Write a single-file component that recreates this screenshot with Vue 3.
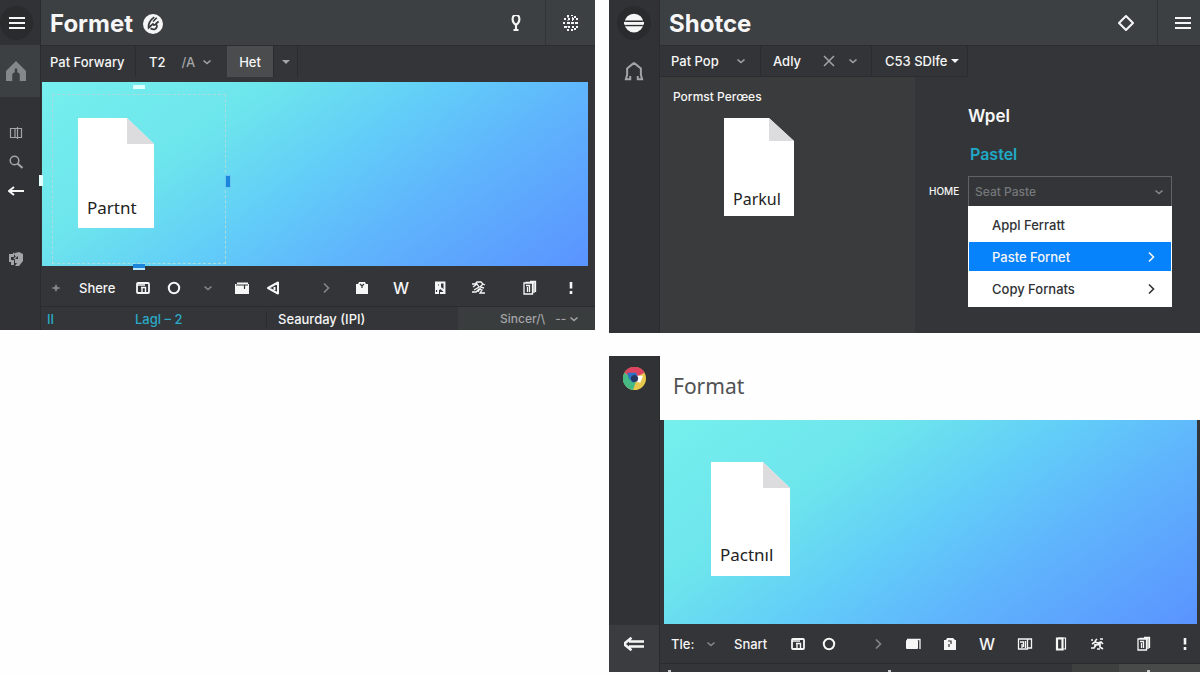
<script setup>
import { ref } from 'vue'

const pasteMode = ref('Seat Paste')

const icons = {
  menu: '<path d="M0 3h16M0 8h16M0 13h16" stroke-width="2"/>',
  home: '<path d="M8 0 0 8v8h5v-5q0-2 3-2t3 2v5h5V8z" fill="currentColor" stroke="none"/><path d="M8 6v4" stroke="#3d4043" stroke-width="2"/>',
  homeLine: '<path d="M8 1.500 2.500 6v5L1.500 14.500H5V12M8 1.500 13.500 6v5l1 3.500H11V12" stroke-width="1.600"/>',
  book: '<path d="M2.500 3.500h11v9h-11zM7 3v10M9.500 2v12"/>',
  search: '<circle cx="6.500" cy="6.500" r="4.300" stroke-width="1.500"/><path d="m9.500 9.500 5 4.500" stroke-width="2.200"/>',
  back: '<path d="M16 8H1M6 4 1 8l5 4" stroke-width="2"/>',
  backDouble: '<path d="M16 6H4M16 10H4M6 3 0 8l6 5" stroke-width="2"/>',
  badge: '<path d="M1 3h5v3H3v3h3v5H3v-3H1zM7 2l4-1 4 2v7l-4 5H7l2-3H7V8h3V5H7z" fill="currentColor" stroke="none"/><path d="m5 2 4 3-3 3"/>',
  pin: '<path d="M8 10C3 7 4 0 8 0s5 7 0 10zM8 9v6M5.500 15h5" stroke-width="2.100"/>',
  dots: '<path d="M4 1h2M8 0h2M11 2h2M1 4h2M5 4h2M9 4h2M13 4h2M0 8h2M4 8h3M8 8h3M12 8h3M1 12h3M5 12h2M9 12h2M13 12h2M4 15h2M8 15h2M11 14h2" stroke-width="1.800"/><path d="M5 2v11M9.500 2v11" stroke-dasharray="1 2" stroke-width="1"/>',
  diamond: '<path d="M8 1 15 8l-7 7-7-7z" stroke-width="2" stroke-linejoin="round"/>',
  spark: '<path d="M8 4 9.500 7 13 8 9.500 9 8 12 6.500 9 3 8l3.500-1z" fill="currentColor" stroke="none"/>',
  window: '<rect x="2" y="3" width="12" height="10" rx="1" stroke-width="1.800"/><path d="M2 5h8M6 7.500h5M7 7v5M10.500 7v5" stroke-width="1.400"/>',
  ring: '<circle cx="8" cy="8" r="5.200" stroke-width="2"/>',
  down: '<path d="m4.500 6.500 3.500 3 3.500-3" stroke-width="1.600"/>',
  caret: '<path d="M4 6h8l-4 4z" fill="currentColor" stroke="none"/>',
  next: '<path d="m6 3.500 4.500 4.500L6 12.500" stroke-width="1.600"/>',
  close: '<path d="m3 3 10 10M13 3 3 13" stroke-width="1.500"/>',
  folder: '<path d="M3 2.500h11V4H15v10H1V4h2z" fill="currentColor" stroke="none"/><path d="M2 5h12M10.500 5v4" stroke="#323437"/>',
  triangle: '<path d="M13 2.500v11L3 8zM9.500 7v3" stroke-width="2" stroke-linejoin="round"/>',
  bag: '<path d="M2 4h2l1-2h6l1 2h2v10H2z" fill="currentColor" stroke="none"/><path d="m6 4 2 2 2-2M8 6v2" stroke="#323437"/>',
  bagLock: '<path d="M2 4h2l1-2h6l2 2h1v10H2z" fill="currentColor" stroke="none"/><path d="M6 5h3v3M7 8v3" stroke="#323437"/>',
  page: '<path d="M3 1.500h6V9l-2 1v4H3z" fill="currentColor" stroke="none"/><path d="M9 2.500h3.500V13H8M9 8l3 3" stroke-width="1.900"/><path d="M4.500 10v2M6 5h1" stroke="#323437"/>',
  scribble: '<path d="M1 4h3l2-2h4l2 2-3 3 4 1M2 7l4-3 2 3-5 3M1 12h4l3-3 3 1-2 3h5M12 4l2 1M10 7l-3 5" stroke-width="1.300"/>',
  gear: '<path d="M2 4h2M6 5l2-2M11 3h3M3 8l3-2 3 1 3-1 2 2M2 12h3l2-3 4-1v3l3 2M6 8v3M8 13h3" stroke-width="1.700"/>',
  stack: '<path d="M2 3h8.500v11H2zM4 5.500h3.500V12M5.500 7v5M3.500 2.500h8.500V13M8 1.500h5.500V12" stroke-width="1.300"/>',
  card: '<rect x="1" y="4" width="12" height="9" rx="1" fill="currentColor" stroke="none"/><path d="M2 3.500h13V13" stroke-width="1.300"/>',
  columns: '<path d="M1.500 3h9v10h-9zM3 6h3.500v5M8.500 5v7M11 3h3.500v9H11M5 8v4" stroke-width="1.300"/>',
  pages: '<path d="M4 2.500h5.500v11H4z" stroke-width="2.200"/><path d="M5 2h7.500v11H10" stroke-width="1.200"/>',
  more: '<path d="M8 2v6.500M8 11v3" stroke-width="2.600"/>',
  globe: '<circle cx="8" cy="8" r="7.500" fill="currentColor" stroke="none"/><path d="M1 6.500h14M1 10h14" stroke="#2b2d2f"/><path d="M0 8.200h16" stroke-width="2"/>',
  swirl: '<circle cx="8" cy="8" r="8" fill="currentColor" stroke="none"/><path d="M9 2.500Q4 6 4.500 11l4-3.500M6 11.500q4 2 5-1t-3-1.500M8 6l3-3M10 8l2.500-2" stroke="#36393c" stroke-width="1.400"/>',
  chrome: '<g stroke="none"><circle cx="8" cy="8" r="8" fill="#e8c84c"/><path d="M1 4a8 8 0 0 1 14 0L9 7 5 7z" fill="#de4460"/><path d="M1 4a8 8 0 0 0 6 12l2-6-4-3z" fill="#45b883"/><path d="M3 4h6l2 4-4 3-3-3z" fill="#2b72c5"/><path d="M9 6h5l-2 5-3-1z" fill="#fff"/><circle cx="8" cy="8" r="2.500" fill="#253663"/></g>',
}

const shareTools = [
  { icon: 'spark', label: 'Add', dim: true },
  { text: 'Shere' },
  { icon: 'window', label: 'Layout' },
  { icon: 'ring', label: 'Shape' },
  { icon: 'down', label: 'More shapes', dim: true },
  { icon: 'folder', label: 'Folder' },
  { icon: 'triangle', label: 'Previous' },
  { icon: 'next', label: 'Next', dim: true },
  { icon: 'bag', label: 'Clipboard' },
  { text: 'W', large: true },
  { icon: 'page', label: 'Page' },
  { icon: 'scribble', label: 'Effects' },
  { icon: 'stack', label: 'Copies' },
  { icon: 'more', label: 'More' },
]

const smartTools = [
  { text: 'Tle:' },
  { icon: 'down', label: 'Open', dim: true },
  { text: 'Snart' },
  { icon: 'window', label: 'Layout' },
  { icon: 'ring', label: 'Shape' },
  { icon: 'next', label: 'Next', dim: true },
  { icon: 'card', label: 'Card' },
  { icon: 'bagLock', label: 'Clipboard' },
  { text: 'W', large: true },
  { icon: 'columns', label: 'Columns' },
  { icon: 'pages', label: 'Pages' },
  { icon: 'gear', label: 'Effects' },
  { icon: 'stack', label: 'Copies' },
  { icon: 'more', label: 'More' },
]

const menuItems = [
  { text: 'Appl Ferratt', arrow: false, active: false },
  { text: 'Paste Fornet', arrow: true, active: true },
  { text: 'Copy Fornats', arrow: true, active: false },
]
</script>

<template>
  <main class="board">
    <section class="panel narrow">
      <nav class="side">
        <button class="side-top" aria-label="Menu"><span class="disc"><svg class="icon" viewBox="0 0 16 16" v-html="icons.menu" /></span></button>
        <button class="side-home lit" aria-label="Home"><svg class="icon big" viewBox="0 0 16 16" v-html="icons.home" /></button>
        <div class="side-tools">
          <button class="grey" aria-label="Library"><svg class="icon" viewBox="0 0 16 16" v-html="icons.book" /></button>
          <button class="grey" aria-label="Search"><svg class="icon" viewBox="0 0 16 16" v-html="icons.search" /></button>
          <button aria-label="Back"><svg class="icon" viewBox="0 0 16 16" v-html="icons.back" /></button>
        </div>
        <button class="side-badge grey" aria-label="Assets"><svg class="icon" viewBox="0 0 16 16" v-html="icons.badge" /></button>
      </nav>
      <div class="work">
        <header class="head">
          <h1>Formet</h1>
          <svg class="icon brand" viewBox="0 0 16 16" v-html="icons.swirl" />
          <button class="head-tool" aria-label="Tips"><svg class="icon" viewBox="0 0 16 16" v-html="icons.pin" /></button>
          <button class="head-end" aria-label="Apps"><svg class="icon" viewBox="0 0 16 16" v-html="icons.dots" /></button>
        </header>
        <div class="tabs first">
          <button class="tab lead">Pat Forwary</button>
          <button class="tab style">T2 <span class="muted">/A</span><svg class="icon muted" viewBox="0 0 16 16" v-html="icons.down" /></button>
          <button class="tab chosen">Het</button>
          <button class="tab drop" aria-label="More"><svg class="icon muted" viewBox="0 0 16 16" v-html="icons.caret" /></button>
        </div>
        <div class="canvas first-canvas">
          <div class="selection">
            <i class="handle top" /><i class="handle right" /><i class="handle bottom" /><i class="handle left" />
          </div>
          <div class="doc doc-a"><span>Partnt</span></div>
        </div>
        <div class="tools share">
          <button v-for="(tool, i) in shareTools" :key="i" :class="{ dim: tool.dim, large: tool.large }" :aria-label="tool.label">
            <template v-if="tool.text">{{ tool.text }}</template>
            <svg v-else class="icon" viewBox="0 0 16 16" v-html="icons[tool.icon]" />
          </button>
        </div>
        <footer class="status">
          <span class="cyan">II</span>
          <span class="cyan">Lagl – 2</span>
          <span class="day">Seaurday (IPI)</span>
          <span class="since">Sincer/\ <span class="dash">--</span><svg class="icon" viewBox="0 0 16 16" v-html="icons.down" /></span>
        </footer>
      </div>
    </section>

    <div class="stack">
      <section class="panel">
        <nav class="side">
          <button class="side-top" aria-label="Globe"><span class="disc"><svg class="icon big" viewBox="0 0 16 16" v-html="icons.globe" /></span></button>
          <button class="side-home grey" aria-label="Home"><svg class="icon big" viewBox="0 0 16 16" v-html="icons.homeLine" /></button>
        </nav>
        <div class="work">
          <header class="head wide">
            <h1>Shotce</h1>
            <button class="head-tool" aria-label="Marker"><svg class="icon" viewBox="0 0 16 16" v-html="icons.diamond" /></button>
            <button class="head-end" aria-label="Menu"><svg class="icon" viewBox="0 0 16 16" v-html="icons.menu" /></button>
          </header>
          <div class="columns">
            <div class="tabs second">
              <button class="tab pop">Pat Pop<svg class="icon muted" viewBox="0 0 16 16" v-html="icons.down" /></button>
              <button class="tab adly">Adly<svg class="icon muted cross" viewBox="0 0 16 16" v-html="icons.close" /><svg class="icon muted" viewBox="0 0 16 16" v-html="icons.down" /></button>
              <button class="tab css">C53 SDlfe<svg class="icon" viewBox="0 0 16 16" v-html="icons.caret" /></button>
            </div>
            <div class="preview">
              <h2>Pormst Perœes</h2>
              <div class="doc doc-b"><span>Parkul</span></div>
            </div>
            <div class="form">
              <h2 class="title">Wpel</h2>
              <a class="pastel" href="#">Pastel</a>
              <label class="home-label" for="paste">HOME</label>
              <div class="field">
                <select id="paste" v-model="pasteMode"><option>Seat Paste</option></select>
                <svg class="icon" viewBox="0 0 16 16" v-html="icons.down" />
              </div>
              <div class="menu" role="menu">
                <button v-for="item in menuItems" :key="item.text" role="menuitem" :class="{ active: item.active }">
                  {{ item.text }}<svg v-if="item.arrow" class="icon" viewBox="0 0 16 16" v-html="icons.next" />
                </button>
              </div>
            </div>
          </div>
        </div>
      </section>

      <section class="panel">
        <nav class="side">
          <button class="side-top" aria-label="Browser"><svg class="icon huge" viewBox="0 0 16 16" v-html="icons.chrome" /></button>
          <button class="side-back" aria-label="Back"><svg class="icon big" viewBox="0 0 16 16" v-html="icons.backDouble" /></button>
        </nav>
        <div class="work">
          <header class="plain"><h1>Format</h1></header>
          <div class="canvas last-canvas">
            <div class="doc doc-c"><span>Pactnıl</span></div>
          </div>
          <div class="tools smart">
            <button v-for="(tool, i) in smartTools" :key="i" :class="{ dim: tool.dim, large: tool.large }" :aria-label="tool.label">
              <template v-if="tool.text">{{ tool.text }}</template>
              <svg v-else class="icon" viewBox="0 0 16 16" v-html="icons[tool.icon]" />
            </button>
          </div>
          <footer class="strip"><i /><i /><i /><i /></footer>
        </div>
      </section>
    </div>
  </main>
</template>

<style>
body {
  margin: 0;
  background: #fefefe;
}
</style>

<style scoped>
.board {
  display: grid;
  grid-template-columns: 595fr 591fr;
  column-gap: 14px;
  align-items: start;
  font-family: Inter, "Noto Sans", sans-serif;
  font-size: 13px;
  font-weight: 500;
  color: #f6f6f6;
}
.stack {
  display: flex;
  flex-direction: column;
  gap: 23px;
  min-width: 0;
}
.panel {
  display: grid;
  grid-template-columns: 51px 1fr;
  background: #333538;
}
.narrow {
  grid-template-columns: 41px 1fr;
}
button {
  display: flex;
  align-items: center;
  padding: 0;
  border: 0;
  background: none;
  color: inherit;
  font: inherit;
  white-space: nowrap;
}
h1, h2 {
  margin: 0;
}
.icon {
  width: 16px;
  height: 16px;
  flex: none;
  fill: none;
  stroke: currentColor;
  stroke-width: 1.2;
}
.big {
  width: 20px;
  height: 20px;
}
.huge {
  width: 23px;
  height: 23px;
}
.grey, .muted {
  color: #a2a4a6;
}

.side {
  display: flex;
  flex-direction: column;
  background: #303235;
  border-right: 1px solid #292b2d;
}
.side button {
  justify-content: center;
}
.side-top {
  height: 45px;
}
.disc {
  display: grid;
  place-items: center;
  width: 34px;
  height: 34px;
  border-radius: 50%;
  background: #292b2d;
}
.side-home {
  height: 52px;
}
.lit {
  background: #3d4043;
  color: #85888a;
}
.side-tools {
  display: flex;
  flex-direction: column;
  gap: 13px;
  margin-top: 28px;
  padding-right: 8px;
}
.narrow .side-top {
  padding-right: 7px;
}
.narrow .side-home {
  padding-right: 8px;
}
.side-badge {
  margin-top: 52px;
  padding-right: 8px;
}
.side-back {
  height: 47px;
  margin-top: auto;
  padding-bottom: 10px;
  box-sizing: border-box;
  background: #3a3c3f;
}

.work {
  min-width: 0;
}
.head {
  display: flex;
  align-items: center;
  height: 45px;
  padding-left: 9px;
  background: #3d4043;
  border-bottom: 1px solid #2b2d2f;
}
.head h1 {
  font-size: 24px;
  font-weight: 700;
  line-height: 30px;
  padding-top: 3px;
}
.brand {
  width: 20px;
  height: 20px;
  margin: 2px 0 0 10px;
}
.head-tool {
  margin-left: auto;
  padding: 0 21px;
}
.head-end {
  align-self: stretch;
  justify-content: center;
  width: 50px;
  border-left: 1px solid #323437;
}
.wide .head-end {
  width: 43px;
  padding-left: 8px;
}
.wide .head-tool {
  padding-right: 23px;
}

.tabs {
  display: flex;
  height: 31px;
}
.tab {
  border-right: 1px solid #2a2c2e;
}
.first {
  margin-bottom: 5px;
}
.lead {
  width: 95px;
  padding-left: 9px;
}
.style {
  width: 91px;
  padding-left: 13px;
  border-right: 0;
}
.style .muted {
  margin-left: 16px;
}
.style .icon.muted {
  margin-left: 4px;
}
.chosen {
  justify-content: center;
  width: 47px;
  background: #4a4c4e;
}
.drop {
  justify-content: center;
  width: 24px;
}

.canvas {
  position: relative;
  background: linear-gradient(145deg, #76efee 0%, #6de5ec 29%, #62cdf8 50%, #5fb4fc 69%, #5a93ff 100%);
}
.first-canvas {
  height: 148px;
  margin: 0 7px 0 1px;
  padding: 36px 0 0 36px;
}
.last-canvas {
  height: 162px;
  margin: 0 3px 0 4px;
  padding: 42px 0 0 47px;
}
.doc {
  position: relative;
  box-sizing: border-box;
  display: flex;
  align-items: flex-end;
  width: 76px;
  height: 110px;
  padding: 0 0 9px 9px;
  background: #fff;
  color: #222;
  font-family: "Noto Sans", sans-serif;
  font-size: 17px;
  font-weight: 400;
  line-height: 22px;
  clip-path: polygon(0 0, calc(100% - 27px) 0, 100% 26px, 100% 100%, 0 100%);
}
.doc::before {
  content: "";
  position: absolute;
  top: 0;
  right: 0;
  width: 27px;
  height: 26px;
  background: #dcdcde;
}
.doc-b {
  width: 70px;
  height: 98px;
  margin: 14px 0 0 64px;
  padding-bottom: 6px;
  font-size: 16px;
  clip-path: polygon(0 0, calc(100% - 25px) 0, 100% 23px, 100% 100%, 0 100%);
}
.doc-b::before {
  width: 25px;
  height: 23px;
}
.doc-c {
  width: 79px;
  height: 114px;
  padding-bottom: 10px;
}
.selection {
  position: absolute;
  inset: 12px auto 2px 10px;
  width: 172px;
  border: 1px dashed #a9dcdc;
}
.handle {
  position: absolute;
  background: #1b86dc;
}
.handle.top, .handle.bottom {
  left: 80px;
  width: 12px;
  height: 4px;
}
.handle.left, .handle.right {
  top: 80px;
  width: 4px;
  height: 11px;
}
.handle.top {
  top: -10px;
  background: #dcffff;
}
.handle.bottom {
  bottom: -7px;
  border-bottom: 2px solid #b9e5fa;
}
.handle.left {
  left: -14px;
  background: #e3ffff;
}
.handle.right {
  right: -6px;
  border: 1px solid #69c5f2;
}

.tools {
  display: grid;
  align-items: center;
  border-bottom: 1px solid #292b2d;
}
.share {
  grid-template-columns: 31fr 56fr 31fr 34fr 34fr 31fr 53fr 36fr 39fr 39fr 39fr 51fr 41fr 32fr;
  padding: 4px 0 0 7px;
  height: 36px;
}
.smart {
  grid-template-columns: 32fr 31fr 56fr 31fr 49fr 35fr 37fr 37fr 38fr 36fr 36fr 47fr 41fr 23fr;
  padding: 1px 0 0 11px;
  height: 38px;
}
.dim {
  color: #85888a;
}
.large {
  font-size: 16px;
}
.status {
  display: grid;
  grid-template-columns: 88fr 131fr 192fr 137fr;
  align-items: center;
  height: 23px;
  padding-left: 6px;
}
.cyan {
  color: #2aa9c6;
}
.day {
  padding-left: 11px;
  border-left: 1px solid #292b2d;
}
.since {
  display: flex;
  align-items: center;
  height: 100%;
  padding-left: 42px;
  background: #3a3d3e;
  color: #a2a4a6;
  font-size: 12px;
}
.dash {
  margin-left: 10px;
}

.columns {
  display: grid;
  grid-template-columns: 255fr 285fr;
  grid-template-rows: 31px auto;
}
.second {
  grid-column: 1 / 3;
  grid-row: 1;
  height: 30px;
  justify-self: start;
  background: #323437;
  border-bottom: 1px solid #2a2c2e;
}
.tab {
  box-sizing: border-box;
}
.pop {
  width: 101px;
  gap: 14px;
  padding-left: 11px;
}
.adly {
  width: 111px;
  gap: 8px;
  padding-left: 12px;
}
.cross {
  margin-left: 12px;
}
.css {
  width: 96px;
  padding-left: 13px;
}
.preview {
  box-sizing: border-box;
  height: 256px;
  padding: 12px 0 0;
  background: #393b3c;
}
.preview h2 {
  padding-left: 13px;
  font-size: 12px;
  font-weight: 500;
  line-height: 15px;
}
.form {
  display: grid;
  grid-template-columns: 39px 1fr;
  align-content: start;
  padding: 27px 28px 0 14px;
}
.title {
  grid-column: 2;
  font-size: 17px;
  font-weight: 600;
  line-height: 24px;
}
.pastel {
  grid-column: 2;
  padding-left: 2px;
  margin: 15px 0 11px;
  color: #20a9c6;
  font-size: 16px;
  font-weight: 600;
  line-height: 22px;
  text-decoration: none;
}
.home-label {
  align-self: center;
  font-size: 10px;
}
.field {
  display: flex;
  align-items: center;
  box-sizing: border-box;
  height: 30px;
  padding-right: 4px;
  border: 1px solid #606366;
  border-bottom: 0;
  color: #85888a;
}
.field select {
  flex: 1;
  min-width: 0;
  padding: 0 0 0 6px;
  border: 0;
  background: none;
  color: #75787a;
  font: inherit;
  font-size: 12px;
  appearance: none;
}
.menu {
  grid-column: 2;
  padding: 1px;
  background: #fff;
  color: #303235;
}
.menu button {
  justify-content: space-between;
  width: 100%;
  height: 35px;
  padding: 0 12px 0 23px;
}
.menu .active {
  height: 29px;
  background: #0682fb;
  color: #f6f6f6;
}

.plain {
  box-sizing: border-box;
  height: 64px;
  padding: 15px 0 0 13px;
  background: #fefefe;
  color: #505254;
}
.plain h1 {
  font-family: "Noto Sans", sans-serif;
  font-size: 21px;
  font-weight: 400;
  line-height: 30px;
}
.strip {
  display: grid;
  grid-template-columns: 220fr 192fr 47fr 81fr;
  height: 8px;
}
.strip i {
  display: flex;
  align-items: flex-end;
  padding-left: 8px;
}
.strip i:nth-child(3) {
  background: #3d403f;
}
.strip i:nth-child(4) {
  padding-left: 28px;
  background: #474a49;
}
.strip i:not(:nth-child(3))::before {
  content: "";
  width: 3px;
  height: 2px;
  background: #c8cacb;
}
</style>
